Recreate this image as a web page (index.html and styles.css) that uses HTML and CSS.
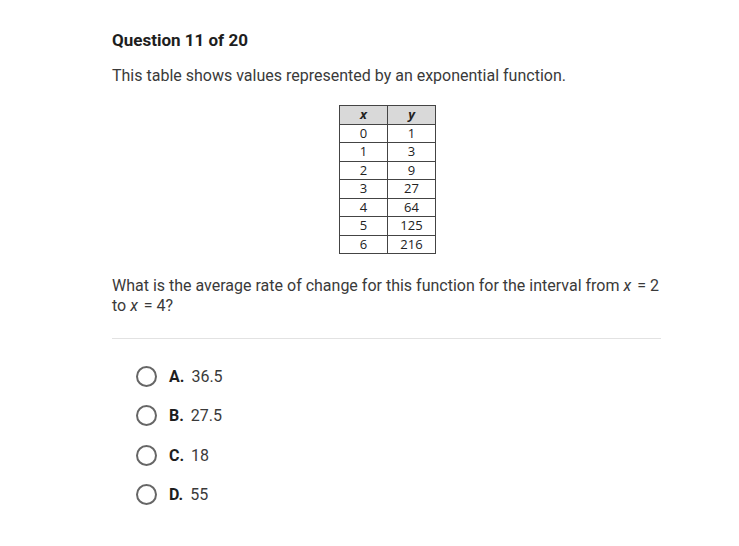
FILE: index.html
```html
<!DOCTYPE html>
<html>
<head>
<meta charset="utf-8">
<link rel="stylesheet" href="styles.css">
</head>
<body>
<div class="page">
  <h1 class="title">Question 11 of 20</h1>
  <p class="text">This table shows values represented by an exponential function.</p>
  <div class="table-wrap">
    <table class="values">
      <tr><th><i>x</i></th><th><i>y</i></th></tr>
      <tr><td>0</td><td>1</td></tr>
      <tr><td>1</td><td>3</td></tr>
      <tr><td>2</td><td>9</td></tr>
      <tr><td>3</td><td>27</td></tr>
      <tr><td>4</td><td>64</td></tr>
      <tr><td>5</td><td>125</td></tr>
      <tr><td>6</td><td>216</td></tr>
    </table>
  </div>
  <p class="text question">What is the average rate of change for this function for the interval from <i class="var">x</i> = 2 to <i class="var">x</i> = 4?</p>
  <hr class="divider">
  <ul class="options">
    <li class="option"><span class="radio"></span><b>A.</b><span>36.5</span></li>
    <li class="option"><span class="radio"></span><b>B.</b><span>27.5</span></li>
    <li class="option"><span class="radio"></span><b>C.</b><span>18</span></li>
    <li class="option"><span class="radio"></span><b>D.</b><span>55</span></li>
  </ul>
</div>
</body>
</html>
```

FILE: styles.css
```css
html, body {
  margin: 0;
  padding: 0;
  background: #fff;
}
body {
  font-family: Roboto, "Liberation Sans", sans-serif;
  color: #3a3a3a;
}
.page {
  width: 549px;
  padding: 29px 0 0 112px;
}
.title {
  margin: 0;
  font-size: 17px;
  font-weight: 700;
  color: #1e1e1e;
  line-height: 22px;
}
.text {
  margin: 15px 0 0;
  font-size: 16px;
  line-height: 20px;
  color: #3a3a3a;
}
.var {
  display: inline-block;
  padding-right: 2px;
}
.table-wrap {
  display: flex;
  justify-content: center;
  margin-top: 19px;
  padding-left: 2px;
}
.values {
  border-collapse: collapse;
  font-family: "Open Sans", "Liberation Sans", sans-serif;
  font-size: 13px;
  color: #222;
}
.values th, .values td {
  border: 1px solid #444;
  width: 47px;
  height: 17.5px;
  padding: 0;
  text-align: center;
  line-height: 17px;
}
.values th {
  background: #d9d9d9;
  font-weight: 700;
}
.question {
  margin-top: 22px;
}
.divider {
  border: 0;
  border-top: 1px solid #e2e2e2;
  margin: 22px 0 0;
}
.options {
  list-style: none;
  margin: 27px 0 0;
  padding: 0 0 0 24px;
}
.option {
  display: flex;
  align-items: center;
  height: 20px;
  margin-bottom: 19.5px;
  font-size: 16px;
  color: #3a3a3a;
}
.radio {
  width: 17px;
  height: 17px;
  border: 2px solid #666;
  border-radius: 50%;
  margin-right: 12px;
}
.option b {
  font-weight: 700;
  color: #1e1e1e;
  margin-right: 7px;
}
```
